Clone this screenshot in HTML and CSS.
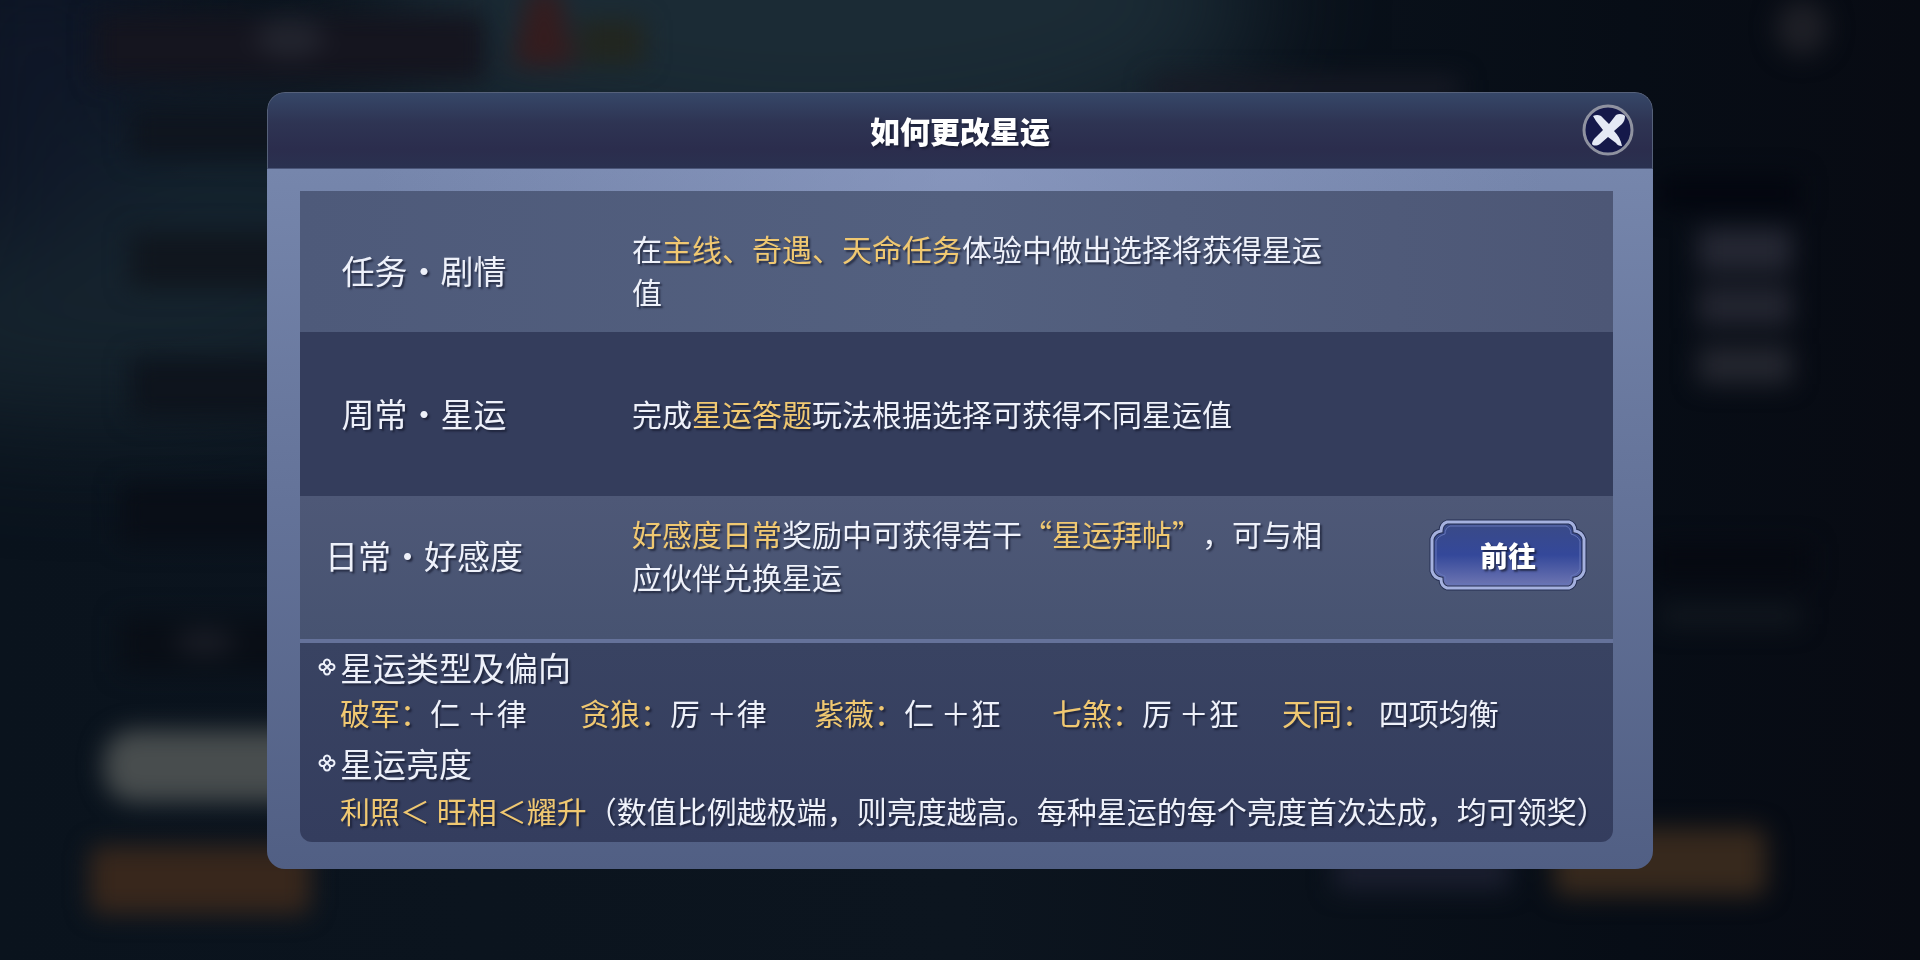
FILE: index.html
```html
<!DOCTYPE html>
<html lang="zh-CN">
<head>
    <meta charset="UTF-8">
    <meta name="viewport" content="width=device-width, initial-scale=1.0">
    <title>如何更改星运</title>
    <link rel="stylesheet" href="styles.css">
</head>
<body>
    <!-- blurred game screen behind the dialog -->
    <svg class="backdrop" viewBox="0 0 1920 960" preserveAspectRatio="none" aria-hidden="true">
        <defs>
            <filter id="soft" x="-20%" y="-20%" width="140%" height="140%" color-interpolation-filters="sRGB"><feGaussianBlur stdDeviation="12"/></filter>
            <filter id="wide" x="-50%" y="-50%" width="200%" height="200%" color-interpolation-filters="sRGB"><feGaussianBlur stdDeviation="60"/></filter>
        </defs>
        <g filter="url(#wide)">
            <ellipse cx="820" cy="0" rx="440" ry="180" fill="#1b2b35"/>
            <ellipse cx="100" cy="330" rx="300" ry="90" fill="#16242e"/>
            <rect x="-60" y="-60" width="200" height="300" fill="#0f1728"/>
            <ellipse cx="300" cy="180" rx="220" ry="80" fill="#14232e"/>
        </g>
        <g filter="url(#soft)">
            <rect x="95" y="14" width="390" height="66" fill="#15151f"/>
            <ellipse cx="290" cy="38" rx="34" ry="20" fill="#22242e"/>
            <path d="M530 -10h28l18 76h-64z" fill="#351c1e"/>
            <rect x="580" y="20" width="64" height="44" fill="#22261f"/>
            <ellipse cx="1802" cy="28" rx="26" ry="28" fill="#1e1f26"/>
            <rect x="1150" y="78" width="310" height="20" fill="#191b26"/>
            <rect x="130" y="106" width="180" height="52" fill="#0f151f"/>
            <rect x="130" y="232" width="180" height="56" fill="#10161e"/>
            <rect x="130" y="358" width="180" height="60" fill="#0e141d"/>
            <rect x="120" y="484" width="180" height="60" fill="#090e17"/>
            <rect x="120" y="616" width="180" height="56" fill="#090e16"/>
            <ellipse cx="205" cy="642" rx="30" ry="14" fill="#191c25"/>
            <rect x="104" y="730" width="220" height="72" rx="30" fill="#484d4e"/>
            <rect x="90" y="846" width="220" height="68" rx="10" fill="#38271c"/>
            <rect x="1660" y="176" width="140" height="34" fill="#03060f"/>
            <rect x="1698" y="228" width="94" height="44" fill="#252733"/>
            <rect x="1698" y="286" width="94" height="40" fill="#232530"/>
            <rect x="1698" y="346" width="94" height="38" fill="#24262f"/>
            <rect x="1650" y="544" width="160" height="36" fill="#060911"/>
            <rect x="1660" y="606" width="140" height="20" fill="#12181f"/>
            <rect x="1334" y="850" width="176" height="40" fill="#1a1e2e"/>
            <rect x="1554" y="828" width="212" height="68" rx="10" fill="#37291d"/>
        </g>
    </svg>

    <main class="page">
        <section class="dialog" role="dialog" aria-labelledby="dialog-title">
            <header class="dialog-header">
                <h1 class="dialog-title" id="dialog-title">如何更改星运</h1>
                <button class="close-btn" type="button" aria-label="关闭">
                    <svg viewBox="0 0 52 52" aria-hidden="true">
                        <circle cx="26" cy="26" r="24" fill="#15194a" stroke="#8f92a0" stroke-width="3"/>
                        <path d="M11 12C15 10 19 11 21 14L27 20L34 11C37 9 42 10 43 12C43 15 42 18 40 20L32 27C36 31 39 36 40 42C37 42 35 41 34 39L26 33L18 40C15 42 11 42 10 40C10 37 12 35 14 33L21 26L14 17Z" fill="#e4e9f5"/>
                    </svg>
                </button>
            </header>

            <div class="dialog-body">
                <div class="row row-light">
                    <h2 class="row-name">任务・剧情</h2>
                    <p class="row-text">在<span class="gold">主线、奇遇、天命任务</span>体验中做出选择将获得星运值</p>
                </div>
                <div class="row row-dark">
                    <h2 class="row-name">周常・星运</h2>
                    <p class="row-text">完成<span class="gold">星运答题</span>玩法根据选择可获得不同星运值</p>
                </div>
                <div class="row row-last">
                    <h2 class="row-name">日常・好感度</h2>
                    <p class="row-text"><span class="gold">好感度日常</span>奖励中可获得若干<span class="gold">“星运拜帖”</span>，可与相应伙伴兑换星运</p>
                    <button class="go-btn" type="button">
                        <svg class="go-frame" viewBox="0 0 156 70" aria-hidden="true">
                            <defs>
                                <linearGradient id="go-fill" x1="0" y1="0" x2="0" y2="1">
                                    <stop offset="0" stop-color="#3a4a86"/>
                                    <stop offset="0.5" stop-color="#34489a"/>
                                    <stop offset="1" stop-color="#7279b4"/>
                                </linearGradient>
                            </defs>
                            <path d="M17 2H139Q145 4 145 11Q152 12 154 19V51Q152 58 145 59Q145 66 139 68H17Q11 66 11 59Q4 58 2 51V19Q4 12 11 11Q11 4 17 2Z" fill="url(#go-fill)" stroke="#252f52" stroke-width="5"/>
                            <path d="M17 2H139Q145 4 145 11Q152 12 154 19V51Q152 58 145 59Q145 66 139 68H17Q11 66 11 59Q4 58 2 51V19Q4 12 11 11Q11 4 17 2Z" fill="none" stroke="#a5b1df" stroke-width="3"/>
                            <path d="M20 6H136Q141 8 141 14Q148 16 150 21V49Q148 54 141 56Q141 62 136 64H20Q15 62 15 56Q8 54 6 49V21Q8 16 15 14Q15 8 20 6Z" fill="none" stroke="#6475b8" stroke-width="1"/>
                        </svg>
                        <span class="go-label">前往</span>
                    </button>
                </div>

                <div class="info">
                    <h2 class="info-title">
                        <svg class="mark" viewBox="0 0 18 18" aria-hidden="true">
                            <path d="M6 6C5 0 13 0 12 6C18 5 18 13 12 12C13 18 5 18 6 12C0 13 0 5 6 6ZM6 6L12 12M12 6L6 12" fill="none" stroke="#eef1fa" stroke-width="2"/>
                        </svg>
                        星运类型及偏向
                    </h2>
                    <ul class="types">
                        <li><span class="gold">破军：</span>仁 ＋律</li>
                        <li><span class="gold">贪狼：</span>厉 ＋律</li>
                        <li><span class="gold">紫薇：</span>仁 ＋狂</li>
                        <li><span class="gold">七煞：</span>厉 ＋狂</li>
                        <li><span class="gold">天同：</span> 四项均衡</li>
                    </ul>
                    <h2 class="info-title">
                        <svg class="mark" viewBox="0 0 18 18" aria-hidden="true">
                            <path d="M6 6C5 0 13 0 12 6C18 5 18 13 12 12C13 18 5 18 6 12C0 13 0 5 6 6ZM6 6L12 12M12 6L6 12" fill="none" stroke="#eef1fa" stroke-width="2"/>
                        </svg>
                        星运亮度
                    </h2>
                    <p class="levels"><span class="gold">利照＜ 旺相＜耀升</span>（数值比例越极端，则亮度越高。每种星运的每个亮度首次达成，均可领奖）</p>
                </div>
            </div>
        </section>
    </main>
</body>
</html>
```
FILE: styles.css
```css
* {
    box-sizing: border-box;
}
body {
    margin: 0;
    background: linear-gradient(90deg, #0a131d 0%, #0c151f 50%, #070d16 85%, #080b13 100%);
    color: #eef1fa;
    font-family: "Noto Sans CJK SC", sans-serif;
    font-size: 30px;
    line-height: 43px;
    text-spacing-trim: space-all;
}
h1, h2, p, ul {
    margin: 0;
    padding: 0;
    font-weight: normal;
}
.backdrop {
    position: fixed;
    top: 0;
    left: 0;
    width: 100%;
    height: 100%;
    z-index: -1;
}
.page {
    display: flex;
    align-items: center;
    min-height: 100vh;
    padding: 0 267px;
}
.dialog {
    flex: 1;
    overflow: hidden;
    border-radius: 18px;
    text-shadow: 2px 2px 2px rgba(20, 24, 44, 0.7);
}
.dialog-header {
    display: grid;
    grid-template-columns: 1fr auto 1fr;
    align-items: center;
    height: 77px;
    padding: 0 18px;
    border: 1px solid #56617a;
    border-bottom: 1px solid #4a5578;
    border-radius: 18px 18px 0 0;
    background: linear-gradient(#364768 0%, #2e3453 40%, #2b2d4d 75%, #2a3150 100%);
}
.dialog-title {
    grid-column: 2;
    color: #ffffff;
    font-size: 30px;
    font-weight: 900;
}
.close-btn {
    justify-self: end;
    width: 52px;
    height: 52px;
    padding: 0;
    border: none;
    background: none;
    cursor: pointer;
}
.close-btn svg {
    display: block;
}
.dialog-body {
    padding: 22px 40px 27px 33px;
    background:
        radial-gradient(ellipse at 50% 0, rgba(150, 164, 204, 0.5), rgba(150, 164, 204, 0) 60%),
        linear-gradient(#7686ac 0%, #65749a 45%, #515f84 100%);
}
.row {
    display: grid;
    grid-template-columns: 248px minmax(0, 696px) 1fr;
    column-gap: 84px;
    align-items: center;
    padding-right: 27px;
}
.row-light {
    min-height: 141px;
    padding-top: 18px;
    background: linear-gradient(90deg, #4e5a7a, #53607f 50%, #4d5776);
}
.row-dark {
    min-height: 164px;
    background: #343d5c;
}
.row-last {
    min-height: 143px;
    padding-bottom: 24px;
    background: linear-gradient(#4e5877, #475371);
}
.row-name {
    font-size: 33px;
    text-align: center;
    white-space: nowrap;
}
.gold {
    color: #f0c871;
}
.go-btn {
    display: grid;
    place-items: center;
    justify-self: end;
    width: 156px;
    height: 70px;
    padding: 0;
    border: none;
    background: none;
    color: #ffffff;
    font-family: inherit;
    font-size: 28px;
    font-weight: 900;
    text-shadow: inherit;
    cursor: pointer;
}
.go-frame,
.go-label {
    grid-area: 1 / 1;
}
.go-frame {
    width: 156px;
    height: 70px;
    overflow: visible;
}
.info {
    padding: 2px 0 7px 18px;
    border-top: 4px solid #65729a;
    border-radius: 0 0 12px 12px;
    background: linear-gradient(#394362, #343d5e);
    background-clip: padding-box;
}
.info-title {
    display: flex;
    align-items: center;
    gap: 4px;
    font-size: 33px;
    line-height: 44px;
}
.mark {
    width: 18px;
    height: 18px;
}
.types {
    display: grid;
    grid-template-columns: 240px 234px 238px 230px auto;
    margin-bottom: 6px;
    padding-left: 22px;
    list-style: none;
    line-height: 46px;
}
.levels {
    padding-left: 22px;
    line-height: 50px;
    white-space: nowrap;
}
```
